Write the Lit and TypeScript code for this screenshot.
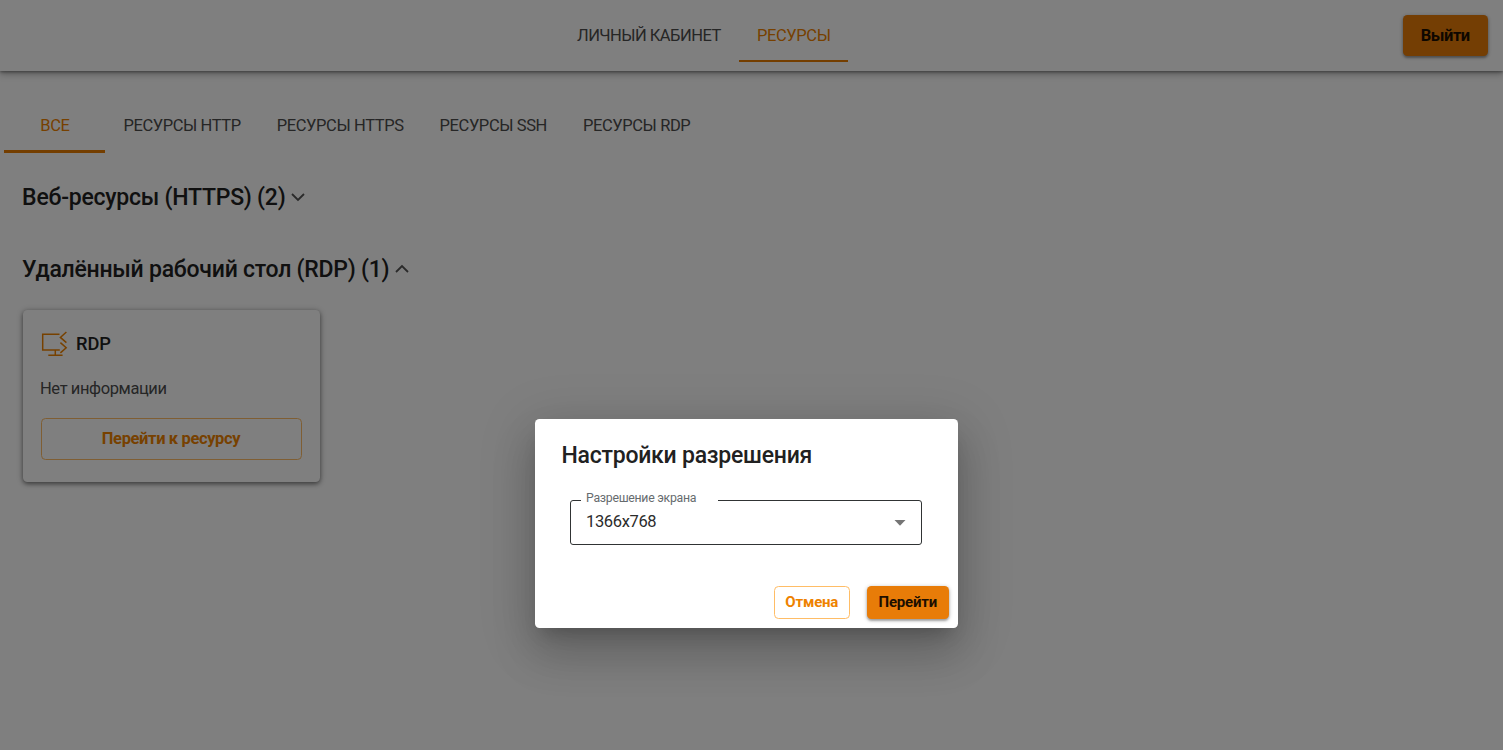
import { LitElement, html, css } from "lit";
import { customElement, state } from "lit/decorators.js";

@customElement("app-root")
export class AppRoot extends LitElement {
  @state() private tabs = ["ВСЕ", "РЕСУРСЫ HTTP", "РЕСУРСЫ HTTPS", "РЕСУРСЫ SSH", "РЕСУРСЫ RDP"];

  static styles = css`
    :host {
      display: block;
      position: relative;
      height: 750px;
      overflow: hidden;
      background: #fefefe;
      color: #212121;
      font: 16.5px/18px Roboto, sans-serif;
      letter-spacing: -0.4px;
    }
    * { box-sizing: border-box; }
    svg { display: block; flex: none; }
    header {
      display: grid;
      grid-template-columns: 559px 1fr auto;
      align-items: center;
      height: 71px;
      padding-right: 15px;
      background: #fff;
      box-shadow: 0 1px 3px rgba(0, 0, 0, 0.4), 0 3px 7px rgba(0, 0, 0, 0.28);
    }
    nav, .tabs { display: flex; }
    nav { grid-column: 2; }
    .link {
      height: 54px;
      padding: 18px 18px 0 18px;
      color: #4c4c4c;
      border-bottom: 2px solid transparent;
      white-space: nowrap;
    }
    nav .link { margin-top: -1px; padding-top: 19px; }
    .link.active { color: #ee8200; border-color: #e87c00; }
    .cabinet { width: 180px; letter-spacing: -0.52px; }
    .current { width: 109px; }
    .tabs { height: 82px; padding: 28px 0 0 4.4px; }
    .tabs .link:first-child { width: 101px; padding: 18px 0 0; text-align: center; }
    .tabs .link.active { height: 54px; border-bottom-width: 3px; }
    button {
      font: 700 16.5px/18px Roboto, sans-serif;
      letter-spacing: -0.37px;
      padding: 0;
      border-radius: 4.5px;
      white-space: nowrap;
    }
    .filled {
      border: 0;
      background: #e87c08;
      color: #1c0f00;
      box-shadow: 0 2px 2px rgba(0, 0, 0, 0.22), 0 1px 4px rgba(0, 0, 0, 0.3);
    }
    .outlined {
      border: 1px solid #ffbd66;
      background: #fff;
      color: #ee8200;
    }
    .exit { width: 85.5px; height: 41px; letter-spacing: -0.5px; }
    main { padding-left: 22.5px; }
    h2 {
      display: flex;
      align-items: center;
      gap: 6px;
      margin: 0 0 0 -0.4px;
      height: 72px;
      font: 500 23px/28px Roboto, sans-serif;
      letter-spacing: -0.24px;
    }
    h2 span { padding-top: 2px; }
    h2.first { margin-top: 8px; }
    .card {
      display: flex;
      flex-direction: column;
      width: 297.5px;
      height: 172.5px;
      margin-top: 4.5px;
      padding: 20px 18px 0;
      border-radius: 4.5px;
      background: #fff;
      box-shadow: 0 2px 4px rgba(0, 0, 0, 0.36), 0 1px 6px rgba(0, 0, 0, 0.3);
    }
    .name {
      display: flex;
      align-items: center;
      gap: 7.5px;
      height: 28px;
      font-size: 18.3px;
      font-weight: 500;
      letter-spacing: -0.1px;
    }
    .info { margin: 22px 0 20px -0.5px; color: #4c4c4c; }
    .go { width: 261px; height: 42px; }
    .backdrop {
      position: absolute;
      inset: 0;
      background: rgba(0, 0, 0, 0.5);
    }
    .dialog {
      position: absolute;
      left: 534.5px;
      top: 419px;
      width: 423px;
      height: 209.4px;
      display: flex;
      flex-direction: column;
      padding: 23px 9px 9.2px 27px;
      border-radius: 4.5px;
      background: #fff;
      box-shadow: 0 12px 17px -8px rgba(0, 0, 0, 0.2), 0 27px 43px 3px rgba(0, 0, 0, 0.14),
        0 10px 52px 9px rgba(0, 0, 0, 0.12);
    }
    h3 {
      margin: 0;
      font: 500 23px/28px Roboto, sans-serif;
      letter-spacing: -0.24px;
    }
    .field {
      width: 351.5px;
      height: 53px;
      margin: 22px 0 0 8.5px;
      padding: 0 15px 0 10px;
      border: 1px solid #303334;
      border-radius: 3px;
    }
    .field legend {
      width: 137px;
      height: 16px;
      padding: 0 0 0 5px;
      font-size: 12.3px;
      line-height: 12px;
      letter-spacing: -0.28px;
      color: #666b6e;
    }
    .value {
      display: flex;
      align-items: center;
      justify-content: space-between;
      padding: 5px 0 0 5px;
      letter-spacing: -0.35px;
      color: #2b2b2b;
    }
    .value svg { margin-top: 1px; }
    .actions {
      display: flex;
      justify-content: flex-end;
      gap: 17.5px;
      margin-top: auto;
    }
    .actions button { height: 33.6px; font-size: 15px; line-height: 17px; letter-spacing: -0.2px; }
    .cancel { width: 75.5px; }
    .confirm { width: 81.5px; }
  `;

  private chevron(d: string) {
    return html`<svg width="14" height="10" viewBox="0 0 14 10" fill="none" stroke="#555" stroke-width="1.8"><path d=${d} /></svg>`;
  }

  render() {
    return html`
      <header>
        <nav>
          <div class="link cabinet">ЛИЧНЫЙ КАБИНЕТ</div>
          <div class="link active current">РЕСУРСЫ</div>
        </nav>
        <button class="filled exit">Выйти</button>
      </header>
      <div class="tabs">
        ${this.tabs.map((t, i) => html`<div class="link ${i === 0 ? "active" : ""}">${t}</div>`)}
      </div>
      <main>
        <h2 class="first"><span>Веб-ресурсы (HTTPS) (2)</span>${this.chevron("M1 2l6 6 6-6")}</h2>
        <h2><span>Удалённый рабочий стол (RDP) (1)</span>${this.chevron("M1 8l6-6 6 6")}</h2>
        <section class="card">
          <div class="name">
            <svg width="28" height="28" viewBox="0 0 28 28" fill="none" stroke="#ee8200" stroke-width="1.5">
              <path d="M18.5 4.3H1.7v15.6h17.1M14.3 20v5.2M7.3 25.3h14.3M25.4 2l-6 5.4 6 5.2M19.4 12.6l5.8 5.1-5.8 5.2" />
            </svg>
            RDP
          </div>
          <div class="info">Нет информации</div>
          <button class="outlined go">Перейти к ресурсу</button>
        </section>
      </main>
      <div class="backdrop"></div>
      <section class="dialog">
        <h3>Настройки разрешения</h3>
        <fieldset class="field">
          <legend>Разрешение экрана</legend>
          <div class="value">
            1366x768
            <svg width="12" height="6" viewBox="0 0 12 6"><path d="M.5 0h11L6 5.7z" fill="#757575" /></svg>
          </div>
        </fieldset>
        <div class="actions">
          <button class="outlined cancel">Отмена</button>
          <button class="filled confirm">Перейти</button>
        </div>
      </section>
    `;
  }
}
